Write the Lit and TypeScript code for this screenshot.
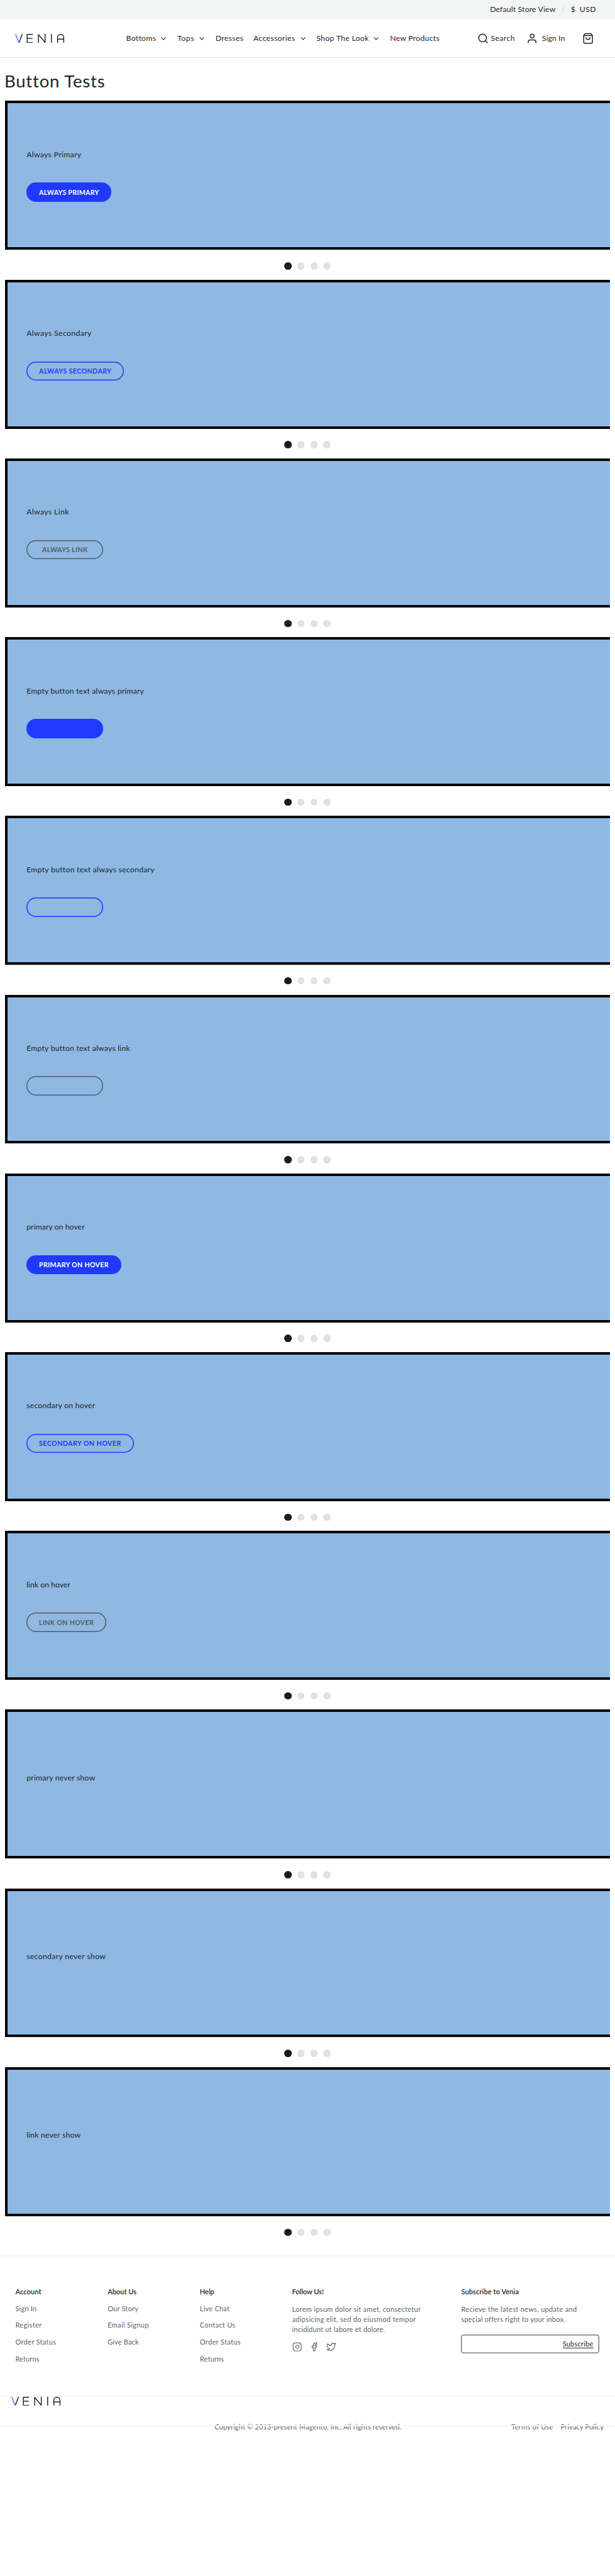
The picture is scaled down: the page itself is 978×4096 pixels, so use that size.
import { LitElement, html, css, svg, unsafeCSS, nothing } from "lit";

const SCALE = 978 / 1280;
/** Converts a design length to a CSS length at page scale. */
const u = (n: number) => unsafeCSS((n * SCALE).toFixed(3) + "px");

/** Inline text tracked so that it spans the given design width. */
class FitText extends LitElement {
  static properties = { w: { type: Number } };
  declare w: number;
  static styles = css`
    :host { display: inline-block; white-space: nowrap; }
  `;
  render() { return html`<slot></slot>`; }
  firstUpdated() {
    document.fonts.ready.then(() => {
      const n = (this.textContent || "").length;
      if (!n || !this.w) return;
      const natural = this.getBoundingClientRect().width;
      this.style.letterSpacing = ((this.w + 1) * SCALE - natural) / n + "px";
    });
  }
}
customElements.define("fit-text", FitText);

const t = (text: string, w: number) => html`<fit-text .w=${w}>${text}</fit-text>`;

const icon = (cls: string, body: unknown) =>
  html`<svg class=${cls} viewBox="0 0 24 24" fill="none" stroke="currentColor" stroke-linecap="round" stroke-linejoin="round">${body}</svg>`;

const logo = html`<svg class="logo" viewBox="0 0 103 19" fill="none" stroke="#1b2529" stroke-width="1.9" stroke-linecap="butt" stroke-linejoin="round">
  <line x1="14.9" y1="0.3" x2="8" y2="18.6" />
  <line x1="0.9" y1="0.3" x2="8" y2="18.6" stroke="#5a82fb" stroke-width="2.2" />
  <polyline points="37,1 25,1 25,18 37,18" />
  <line x1="25" y1="9.3" x2="36" y2="9.3" />
  <polyline points="48.6,19 48.6,1.2 62.4,17.6 62.4,0" />
  <line x1="75.6" y1="0" x2="75.6" y2="19" />
  <svg x="86" y="0" width="17" height="19" viewBox="0 0 17 19">
    <rect x="2.5" y="1" width="12.8" height="30" rx="6" />
    <line x1="2.5" y1="10.8" x2="15" y2="10.8" />
  </svg>
</svg>`;

type Kind = "primary" | "secondary" | "link";
interface Slide { title: string; w: number; kind?: Kind; label?: string; lw?: number; }
const slides: Slide[] = [
  { title: "Always Primary", w: 113, kind: "primary", label: "ALWAYS PRIMARY", lw: 124 },
  { title: "Always Secondary", w: 134.5, kind: "secondary", label: "ALWAYS SECONDARY", lw: 150 },
  { title: "Always Link", w: 87.5, kind: "link", label: "ALWAYS LINK", lw: 94 },
  { title: "Empty button text always primary", w: 243, kind: "primary" },
  { title: "Empty button text always secondary", w: 265, kind: "secondary" },
  { title: "Empty button text always link", w: 214, kind: "link" },
  { title: "primary on hover", w: 120, kind: "primary", label: "PRIMARY ON HOVER", lw: 144 },
  { title: "secondary on hover", w: 142, kind: "secondary", label: "SECONDARY ON HOVER", lw: 170 },
  { title: "link on hover", w: 90, kind: "link", label: "LINK ON HOVER", lw: 113 },
  { title: "primary never show", w: 142 },
  { title: "secondary never show", w: 164 },
  { title: "link never show", w: 111.5 },
];

const nav: [string, number, boolean, string][] = [
  ["Bottoms", 61, true, "n1"], ["Tops", 34.5, true, "n2"], ["Dresses", 57.5, false, "n3"],
  ["Accessories", 86, true, "n4"], ["Shop The Look", 108, true, "n5"], ["New Products", 102, false, "n6"],
];

const columns: { head: [string, number]; links: [string, number][] }[] = [
  { head: ["Account", 53], links: [["Sign In", 43.5], ["Register", 54], ["Order Status", 84], ["Returns", 49]] },
  { head: ["About Us", 59], links: [["Our Story", 63], ["Email Signup", 85], ["Give Back", 64]] },
  { head: ["Help", 29], links: [["Live Chat", 61], ["Contact Us", 73], ["Order Status", 84], ["Returns", 49]] },
];

class AppRoot extends LitElement {
  static styles = css`
    :host {
      display: block; height: 4096px; overflow: hidden; background: #fff; color: #1b2529;
      font-family: Lato, "Noto Sans", sans-serif; font-size: ${u(16)}; line-height: ${u(24)};
    }
    * { box-sizing: border-box; margin: 0; }
    svg { display: block; flex: none; }
    .topbar {
      height: ${u(40)}; background: #f4f6f5; display: flex; align-items: center;
      justify-content: flex-end; padding-right: ${u(40)};
    }
    .topbar .store { width: ${u(152)}; }
    .topbar .sep { width: 1px; height: ${u(16)}; background: #d9dcdd; margin-right: ${u(15)}; }
    .topbar .dollar { width: ${u(18.5)}; }
    .topbar .usd { width: ${u(33.5)}; }
    header {
      height: ${u(81)}; border-bottom: 1px solid #e0e2e2; display: flex; align-items: center;
      padding-left: ${u(32)};
    }
    .logo { width: ${u(103)}; height: ${u(19)}; }
    nav { display: flex; margin-left: ${u(127.5)}; width: ${u(731)}; }
    .item { display: flex; align-items: center; justify-content: space-between; }
    .chev { width: ${u(16)}; height: ${u(16)}; stroke-width: 2; margin-right: ${u(-3)}; }
    .n1 { width: ${u(83)}; margin-right: ${u(23.5)}; }
    .n2 { width: ${u(56)}; margin-right: ${u(23.6)}; }
    .n3 { width: ${u(58)}; margin-right: ${u(20.8)}; }
    .n4 { width: ${u(108.4)}; margin-right: ${u(23)}; }
    .n5 { width: ${u(129.5)}; margin-right: ${u(23.6)}; }
    .ic { width: ${u(24)}; height: ${u(24)}; stroke-width: 2; }
    .search { display: flex; align-items: center; width: ${u(102.5)}; gap: ${u(4)}; }
    .user { display: flex; align-items: center; width: ${u(116)}; gap: ${u(8)}; }

    h1 { font-weight: 400; font-size: ${u(36)}; line-height: ${u(48)}; padding: ${u(24)} 0 0 ${u(9)}; height: ${u(89)}; }
    .slide { height: ${u(372)}; padding: 0 ${u(10)}; }
    .frame { height: ${u(310)}; border: 4px solid #000; border-right: 0; background: #8fb8e2; }
    .fill { height: 100%; padding-left: ${u(40)}; display: flex; flex-direction: column; justify-content: center; align-items: flex-start; }
    .title { height: ${u(50)}; }
    .btn {
      margin-top: ${u(20)}; height: ${u(40)}; min-width: ${u(160)}; border-radius: ${u(20)};
      padding: ${u(1)} ${u(26)} 0 ${u(26)}; display: flex; align-items: center; justify-content: center;
      font-weight: 700; font-size: ${u(14)};
    }
    .primary { background: #1f39ff; color: #fff; }
    .secondary { color: #1f39ff; box-shadow: inset 0 0 0 ${u(2)} #1f39ff; }
    .link { color: #535f65; box-shadow: inset 0 0 0 ${u(2)} #535f65; }
    .dots { display: flex; justify-content: center; gap: ${u(12)}; padding-top: ${u(26)}; }
    .dot { width: ${u(15)}; height: ${u(15)}; border-radius: 50%; background: #e0e1e3; }
    .dot.on { background: #1d1a19; }

    .rule { height: ${u(2)}; background: #f4f5f5; }
    .gap { height: ${u(20)}; }
    .links {
      height: ${u(289.5)}; padding: ${u(63)} 0 0 ${u(32)}; display: grid;
      grid-template-columns: ${u(192)} ${u(192)} ${u(192)} ${u(352)} ${u(288)};
      font-size: ${u(14.4)}; line-height: ${u(21)}; color: #5a6569;
    }
    .head { font-weight: 600; color: #1b2529; height: ${u(35)}; }
    .links li { height: ${u(35)}; }
    ul { list-style: none; padding: 0; }
    .para { padding-top: ${u(2)}; }
    .para p, .news p { height: ${u(21)}; }
    .social { display: flex; gap: ${u(16)}; margin-top: ${u(15)}; }
    .soc { width: ${u(20)}; height: ${u(20)}; stroke-width: 1.9; }
    .news { padding-top: ${u(1.5)}; }
    .field {
      margin-top: ${u(20.5)}; height: ${u(40)}; border-radius: ${u(6)};
      box-shadow: inset 0 0 0 ${u(2)} #747c80; color: #1b2529;
      display: flex; align-items: center; justify-content: flex-end; padding-right: ${u(13)};
    }
    .sub { border-bottom: 1px solid #1b2529; line-height: ${u(17)}; height: ${u(18)}; }
    .mark { height: ${u(60)}; padding-left: ${u(24)}; }
    .legal {
      margin-top: ${u(-11)}; display: flex; align-items: center; height: ${u(24)};
      padding-left: ${u(446.5)}; font-size: ${u(14.4)}; color: #5a6569;
    }
    .copy { width: ${u(617.5)}; }
    .terms { width: ${u(103)}; }
    .over { position: relative; z-index: 1; }
  `;

  private chev() { return icon("chev", svg`<polyline points="6 9 12 16 18 9"></polyline>`); }

  private slide(s: Slide) {
    return html`<section class="slide">
      <div class="frame"><div class="fill">
        <div class="title">${t(s.title, s.w)}</div>
        ${s.kind ? html`<div class="btn ${s.kind}">${s.label ? t(s.label, s.lw!) : nothing}</div>` : nothing}
      </div></div>
      <div class="dots"><i class="dot on"></i><i class="dot"></i><i class="dot"></i><i class="dot"></i></div>
    </section>`;
  }

  render() {
    return html`
      <div class="topbar">
        <span class="store">${t("Default Store View", 135.5)}</span><i class="sep"></i>
        <span class="dollar">${t("$", 9)}</span><span class="usd">${t("USD", 33)}</span>
      </div>
      <header>
        ${logo}
        <nav>${nav.map(([label, w, more, cls]) => html`<span class="item ${cls}">${t(label, w)}${more ? this.chev() : nothing}</span>`)}</nav>
        <span class="search">${icon("ic", svg`<circle cx="11" cy="11" r="8"></circle><line x1="21" y1="21" x2="16.65" y2="16.65"></line>`)}${t("Search", 49.5)}</span>
        <span class="user">${icon("ic", svg`<path d="M20 21v-2a4 4 0 0 0-4-4H8a4 4 0 0 0-4 4v2"></path><circle cx="12" cy="7" r="4"></circle>`)}${t("Sign In", 47)}</span>
        ${icon("ic", svg`<path d="M6 2L3 6v14a2 2 0 0 0 2 2h14a2 2 0 0 0 2-2V6l-3-4z"></path><line x1="3" y1="6" x2="21" y2="6"></line><path d="M16 10a4 4 0 0 1-8 0"></path>`)}
      </header>
      <h1>${t("Button Tests", 208)}</h1>
      ${slides.map((s) => this.slide(s))}
      <div class="gap"></div>
      <div class="rule"></div>
      <div class="links">
        ${columns.map((c) => html`<div><div class="head">${t(...c.head)}</div><ul>${c.links.map((l) => html`<li>${t(...l)}</li>`)}</ul></div>`)}
        <div>
          <div class="head">${t("Follow Us!", 65)}</div>
          <div class="para">
            <p>${t("Lorem ipsum dolor sit amet, consectetur", 267)}</p>
            <p>${t("adipsicing elit, sed do eiusmod tempor", 257)}</p>
            <p>${t("incididunt ut labore et dolore.", 192.5)}</p>
          </div>
          <div class="social">
            ${icon("soc", svg`<rect x="2" y="2" width="20" height="20" rx="5" ry="5"></rect><path d="M16 11.37A4 4 0 1 1 12.63 8 4 4 0 0 1 16 11.37z"></path><line x1="17.5" y1="6.5" x2="17.51" y2="6.5"></line>`)}
            ${icon("soc", svg`<path d="M18 2h-3a5 5 0 0 0-5 5v3H7v4h3v8h4v-8h3l1-4h-4V7a1 1 0 0 1 1-1h3z"></path>`)}
            ${icon("soc", svg`<path d="M23 3a10.9 10.9 0 0 1-3.14 1.53 4.48 4.48 0 0 0-7.86 3v1A10.66 10.66 0 0 1 3 4s-4 9 5 13a11.64 11.64 0 0 1-7 2c9 5 20 0 20-11.5a4.5 4.5 0 0 0-.08-.83A7.72 7.72 0 0 0 23 3z"></path>`)}
          </div>
        </div>
        <div>
          <div class="head">${t("Subscribe to Venia", 119)}</div>
          <div class="news">
            <p>${t("Recieve the latest news, update and", 240)}</p>
            <p>${t("special offers right to your inbox.", 215.5)}</p>
          </div>
          <div class="field"><span class="sub">${t("Subscribe", 63)}</span></div>
        </div>
      </div>
      <div class="rule"></div>
      <div class="mark">${logo}</div>
      <div class="rule over"></div>
      <div class="legal">
        <span class="copy">${t("Copyright © 2013-present Magento, Inc. All rights reserved.", 388)}</span>
        <span class="terms">${t("Terms of Use", 86.5)}</span>
        <span>${t("Privacy Policy", 88.5)}</span>
      </div>`;
  }
}
customElements.define("app-root", AppRoot);
